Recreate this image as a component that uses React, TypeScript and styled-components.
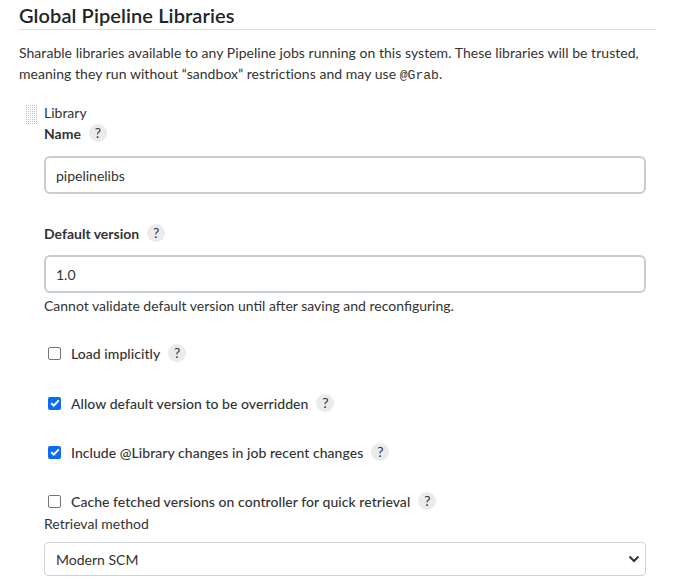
import React from "react";
import styled, { createGlobalStyle } from "styled-components";

const Global = createGlobalStyle`
  html, body { margin: 0; padding: 0; background: #fff; }
  body {
    font-family: "Segoe UI", Lato, "Noto Sans", "Liberation Sans", sans-serif;
    font-size: 14px;
    color: #333;
  }
  * { box-sizing: border-box; }
`;

const Page = styled.div`
  width: 656px;
  padding-left: 19px;
`;

const Title = styled.h2`
  margin: 0;
  padding-top: 3px;
  padding-bottom: 2px;
  font-size: 20px;
  line-height: 24px;
  font-weight: 600;
  letter-spacing: 0.1px;
  color: #212529;
  border-bottom: 1px solid #dedede;
`;

const Description = styled.p`
  margin: 12px 0 0;
  line-height: 21px;
  letter-spacing: 0.04px;
  color: #333;
`;

const Code = styled.code`
  font-family: "Liberation Mono", "DejaVu Sans Mono", monospace;
  font-size: 13px;
  line-height: 1;
`;

const Repeated = styled.div`
  display: flex;
  margin-top: 19px;
  margin-left: 6px;
  gap: 6px;
`;

const Handle = styled.div`
  width: 13px;
  height: 20px;
  margin-top: 2px;
  flex: none;
`;

const Body = styled.div`
  flex: 1;
  min-width: 0;
  padding-right: 10px;
`;

const Caption = styled.div`
  line-height: 20px;
  color: #333;
`;

const Label = styled.div<{ $top?: number; $plain?: boolean }>`
  display: flex;
  align-items: center;
  height: 20px;
  margin-top: ${(p) => p.$top ?? 0}px;
  font-weight: ${(p) => (p.$plain ? 400 : 700)};
  color: #333;
`;

const Help = styled.span`
  display: inline-flex;
  align-items: center;
  justify-content: center;
  width: 18px;
  height: 18px;
  margin-left: 8px;
  border-radius: 50%;
  background: #ebebeb;
  color: #333;
  font-weight: 400;
  font-size: 14px;
  line-height: 1;
`;

const TextInput = styled.input<{ $top: number }>`
  display: block;
  width: 100%;
  height: 38px;
  margin-top: ${(p) => p.$top}px;
  padding: 0 10px;
  border: 2px solid #c6ced3;
  border-radius: 6px;
  font: inherit;
  color: #333;
  background: #fff;
  outline: none;
`;

const Hint = styled.div`
  margin-top: 3px;
  line-height: 20px;
  color: #333;
`;

const CheckRow = styled.label<{ $top: number }>`
  display: flex;
  align-items: center;
  height: 20px;
  margin-top: ${(p) => p.$top}px;
  padding-left: 4px;
  color: #333;
`;

const Box = styled.span<{ $on?: boolean }>`
  display: inline-flex;
  align-items: center;
  justify-content: center;
  width: 13px;
  height: 13px;
  margin-right: 10px;
  border-radius: 2px;
  border: ${(p) => (p.$on ? "none" : "1px solid #767676")};
  background: ${(p) => (p.$on ? "#0b6cf0" : "#fff")};
`;

const CheckText = styled.span`
  font-weight: 500;
  letter-spacing: 0.05px;
`;

const SelectBox = styled.div`
  display: flex;
  align-items: center;
  justify-content: space-between;
  height: 34px;
  margin-top: 9px;
  padding: 0 5px 0 11px;
  border: 1px solid #ced4da;
  border-radius: 4px;
  color: #333;
`;

const DragDots = () => (
  <svg width="13" height="20" viewBox="0 0 13 20">
    {Array.from({ length: 10 }).map((_, r) =>
      Array.from({ length: 6 }).map((__, c) => (
        <rect key={`${r}-${c}`} x={c * 2 + 1} y={r * 2} width="1" height="1" fill="#bdbdbd" />
      ))
    )}
  </svg>
);

const Tick = () => (
  <svg width="10" height="8" viewBox="0 0 10 8">
    <path d="M1.2 4.2 L3.8 6.6 L8.8 1.4" fill="none" stroke="#fff" strokeWidth="2" />
  </svg>
);

const Chevron = () => (
  <svg width="12" height="8" viewBox="0 0 12 8">
    <path d="M1.5 1.5 L6 6 L10.5 1.5" fill="none" stroke="#333" strokeWidth="2" />
  </svg>
);

const Check = ({ on, label, top }: { on?: boolean; label: string; top: number }) => (
  <CheckRow $top={top}>
    <Box $on={on}>{on && <Tick />}</Box>
    <CheckText>{label}</CheckText>
    <Help>?</Help>
  </CheckRow>
);

export default function App() {
  return (
    <Page>
      <Global />
      <Title>Global Pipeline Libraries</Title>
      <Description>
        Sharable libraries available to any Pipeline jobs running on this system. These libraries will be trusted,
        meaning they run without “sandbox” restrictions and may use <Code>@Grab</Code>.
      </Description>
      <Repeated>
        <Handle>
          <DragDots />
        </Handle>
        <Body>
          <Caption>Library</Caption>
          <Label>
            Name<Help>?</Help>
          </Label>
          <TextInput $top={13} defaultValue="pipelinelibs" />
          <Label $top={29}>
            Default version<Help>?</Help>
          </Label>
          <TextInput $top={12} defaultValue="1.0" />
          <Hint>Cannot validate default version until after saving and reconfiguring.</Hint>
          <Check top={27} label="Load implicitly" />
          <Check top={30} on label="Allow default version to be overridden" />
          <Check top={29} on label="Include @Library changes in job recent changes" />
          <Check top={29} label="Cache fetched versions on controller for quick retrieval" />
          <Label $top={2} $plain>
            Retrieval method
          </Label>
          <SelectBox>
            <span>Modern SCM</span>
            <Chevron />
          </SelectBox>
        </Body>
      </Repeated>
    </Page>
  );
}
